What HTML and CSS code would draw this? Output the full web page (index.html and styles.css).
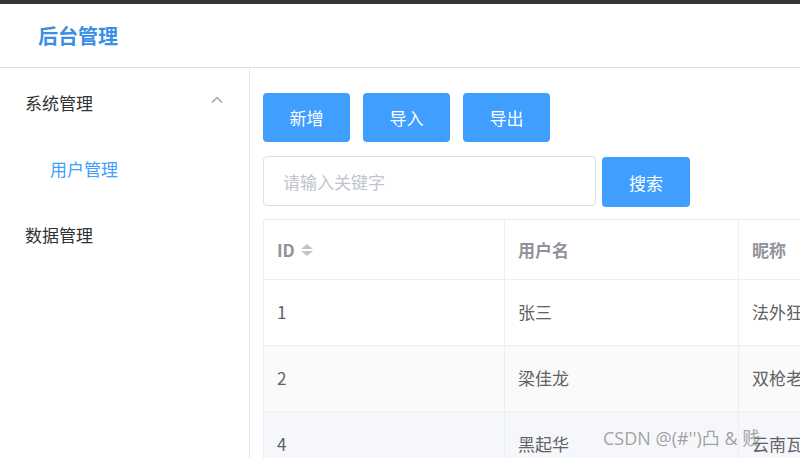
FILE: index.html
```html
<!DOCTYPE html>
<html lang="zh-CN">
<head>
<meta charset="utf-8">
<link rel="stylesheet" href="styles.css">
</head>
<body>
<div class="topbar"></div>
<header class="header"><span class="title">后台管理</span></header>
<div class="layout">
  <aside class="aside">
    <div class="menu-item submenu">
      <span>系统管理</span>
      <svg class="arrow" width="12" height="8" viewBox="0 0 12 8"><path d="M1 6.5 L6 1.5 L11 6.5" fill="none" stroke="#909399" stroke-width="1.1"/></svg>
    </div>
    <div class="menu-item sub active">用户管理</div>
    <div class="menu-item">数据管理</div>
  </aside>
  <main class="main">
    <div class="toolbar">
      <button class="btn">新增</button>
      <button class="btn">导入</button>
      <button class="btn">导出</button>
    </div>
    <div class="search">
      <div class="input">请输入关键字</div>
      <button class="btn btn-search">搜索</button>
    </div>
    <div class="table">
      <div class="row head">
        <div class="cell c1">ID <span class="sort"><i class="up"></i><i class="down"></i></span></div>
        <div class="cell c2">用户名</div>
        <div class="cell c3">昵称</div>
      </div>
      <div class="row">
        <div class="cell c1">1</div>
        <div class="cell c2">张三</div>
        <div class="cell c3">法外狂徒</div>
      </div>
      <div class="row striped">
        <div class="cell c1">2</div>
        <div class="cell c2">梁佳龙</div>
        <div class="cell c3">双枪老太婆</div>
      </div>
      <div class="row hover">
        <div class="cell c1">4</div>
        <div class="cell c2">黑起华</div>
        <div class="cell c3">云南瓦</div>
      </div>
    </div>
  </main>
</div>
<div class="watermark">CSDN @(#'')凸 &amp; 贱</div>
</body>
</html>
```

FILE: styles.css
```css
* { box-sizing: border-box; }
html, body { margin: 0; padding: 0; }
body {
  width: 800px;
  height: 458px;
  overflow: hidden;
  font-family: "Noto Sans CJK SC", "Open Sans", sans-serif;
  color: #303133;
  background: #fff;
  position: relative;
}
.topbar { height: 4px; background: #35363a; }
.header {
  height: 64px;
  border-bottom: 1px solid #dcdfe6;
  display: flex;
  align-items: center;
  padding-left: 38px;
}
.title {
  font-size: 20px;
  font-weight: 700;
  color: #3a8ee6;
}
.layout { display: flex; height: 390px; }
.aside {
  width: 250px;
  flex: none;
  border-right: 1px solid #e6e6e6;
  padding-top: 1px;
}
.menu-item {
  height: 66px;
  display: flex;
  align-items: center;
  padding-left: 25px;
  padding-right: 26px;
  font-size: 17px;
  color: #303133;
}
.menu-item.submenu { justify-content: space-between; }
.arrow { margin-top: -4px; }
.menu-item.sub { padding-left: 50px; color: #409eff; }
.main {
  flex: 1;
  min-width: 0;
  padding: 25px 0 0 13px;
  overflow: hidden;
}
.toolbar { display: flex; gap: 13px; }
.btn {
  width: 87px;
  height: 49px;
  border: none;
  border-radius: 4px;
  background: #409eff;
  color: #fff;
  font-family: inherit;
  font-size: 17px;
  padding: 0;
}
.search { display: flex; gap: 6px; margin-top: 14px; }
.input {
  width: 333px;
  height: 50px;
  border: 1px solid #dcdfe6;
  border-radius: 4px;
  color: #c0c4cc;
  font-size: 17px;
  display: flex;
  align-items: center;
  padding-left: 19px;
}
.btn-search { width: 88px; height: 50px; margin-top: 1px; }
.table {
  margin-top: 12px;
  width: max-content;
  border-top: 1px solid #ebeef5;
  border-left: 1px solid #ebeef5;
}
.row { display: flex; height: 66px; border-bottom: 1px solid #ebeef5; }
.row.head { height: 60px; }
.row.striped { background: #fafafa; }
.row.hover { background: #f5f7fa; }
.cell {
  flex: none;
  display: flex;
  align-items: center;
  padding-left: 13px;
  padding-bottom: 2px;
  font-size: 17px;
  color: #606266;
  border-right: 1px solid #ebeef5;
}
.head .cell { font-weight: 700; color: #909399; padding-bottom: 0; }
.c1 { width: 241px; }
.c2 { width: 234px; }
.c3 { width: 200px; }
.sort { display: inline-flex; flex-direction: column; gap: 2px; margin-left: 6px; }
.sort i { width: 0; height: 0; border-left: 6px solid transparent; border-right: 6px solid transparent; }
.sort .up { border-bottom: 5px solid #c0c4cc; }
.sort .down { border-top: 5px solid #c0c4cc; }
.watermark {
  position: absolute;
  left: 603px;
  top: 424px;
  font-size: 18px;
  color: rgba(140, 140, 140, 0.8);
  font-family: "Open Sans", "Noto Sans CJK SC", sans-serif;
  white-space: nowrap;
}
```
